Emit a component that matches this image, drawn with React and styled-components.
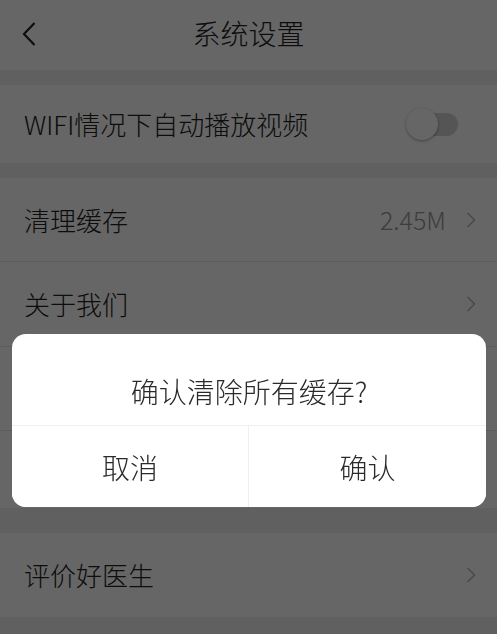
import React from "react";
import styled, { createGlobalStyle } from "styled-components";

const GlobalStyle = createGlobalStyle`
  html, body { margin: 0; padding: 0; }
  body {
    font-family: "Noto Sans CJK SC", "Noto Sans", sans-serif;
    background: #f0f0f0;
    -webkit-font-smoothing: antialiased;
  }
  * { box-sizing: border-box; }
`;

const Page = styled.div`
  min-height: 100vh;
  display: flex;
  flex-direction: column;
  background: #f0f0f0;
`;

const Header = styled.header`
  height: 70px;
  background: #fff;
  display: grid;
  grid-template-columns: 70px 1fr 70px;
  align-items: center;
`;

const BackButton = styled.button`
  border: 0;
  background: none;
  padding: 0 0 0 22px;
  height: 100%;
  display: flex;
  align-items: center;
  cursor: pointer;
  margin-top: -2px;
`;

const Title = styled.h1`
  margin: -5px 0 0;
  text-align: center;
  font-size: 28px;
  font-weight: 300;
  color: #222;
  line-height: 1;
`;

const Section = styled.section`
  margin-top: ${(p) => p.$gap}px;
  background: #fff;
  display: flex;
  flex-direction: column;
`;

const Row = styled.div`
  height: ${(p) => p.$h}px;
  display: flex;
  align-items: center;
  justify-content: space-between;
  padding: 0 21px 0 24px;
  border-bottom: ${(p) => (p.$last ? "none" : "1px solid #e6e6e6")};
`;

const Label = styled.span`
  font-size: 26px;
  font-weight: 300;
  color: #222;
  line-height: 1;
`;

const Trail = styled.div`
  display: flex;
  align-items: center;
  gap: 20px;
`;

const Value = styled.span`
  font-size: 25px;
  font-weight: 300;
  color: #999;
  line-height: 1;
`;

const Toggle = styled.div`
  position: relative;
  width: 52px;
  height: 34px;
  margin-right: 18px;
  display: flex;
  align-items: center;
  justify-content: flex-end;
`;

const Track = styled.div`
  width: 48px;
  height: 23px;
  border-radius: 12px;
  background: #d4d4d4;
`;

const Knob = styled.div`
  position: absolute;
  left: 0;
  top: 1px;
  width: 32px;
  height: 32px;
  border-radius: 50%;
  background: #fff;
  box-shadow: 0 1px 3px rgba(0, 0, 0, 0.35);
`;

const Overlay = styled.div`
  position: fixed;
  inset: 0;
  background: rgba(0, 0, 0, 0.6);
`;

const Dialog = styled.div`
  position: fixed;
  top: 334px;
  left: 12px;
  width: 474px;
  border-radius: 14px;
  background: #fff;
  overflow: hidden;
  display: flex;
  flex-direction: column;
`;

const DialogTitle = styled.div`
  height: 92px;
  display: flex;
  align-items: center;
  justify-content: center;
  font-size: 28px;
  font-weight: 300;
  color: #2a2a2a;
  border-bottom: 1px solid #efefef;
  padding-top: 22px;
`;

const Actions = styled.div`
  display: grid;
  grid-template-columns: 236px 1fr;
  height: 81px;
`;

const ActionButton = styled.button`
  border: 0;
  background: #fff;
  font-family: inherit;
  font-size: 28px;
  font-weight: 300;
  color: #2a2a2a;
  cursor: pointer;
  border-left: ${(p) => (p.$divider ? "1px solid #efefef" : "none")};
`;

const Chevron = () => (
  <svg width="10" height="16" viewBox="0 0 10 16" fill="none">
    <polyline points="1.5,1 8.5,8 1.5,15" stroke="#b8b8b8" strokeWidth="1.6" />
  </svg>
);

const BackIcon = () => (
  <svg width="14" height="24" viewBox="0 0 14 24" fill="none">
    <polyline points="12.5,1 2,12 12.5,23" stroke="#222" strokeWidth="2.2" />
  </svg>
);

export default function App() {
  return (
    <>
      <GlobalStyle />
      <Page>
        <Header>
          <BackButton aria-label="返回">
            <BackIcon />
          </BackButton>
          <Title>系统设置</Title>
          <span />
        </Header>

        <Section $gap={15}>
          <Row $h={78} $last>
            <Label>WIFI情况下自动播放视频</Label>
            <Toggle>
              <Track />
              <Knob />
            </Toggle>
          </Row>
        </Section>

        <Section $gap={15}>
          <Row $h={84}>
            <Label>清理缓存</Label>
            <Trail>
              <Value>2.45M</Value>
              <Chevron />
            </Trail>
          </Row>
          <Row $h={85}>
            <Label>关于我们</Label>
            <Chevron />
          </Row>
          <Row $h={84} />
          <Row $h={77} $last />
        </Section>

        <Section $gap={25}>
          <Row $h={84} $last>
            <Label>评价好医生</Label>
            <Chevron />
          </Row>
        </Section>
      </Page>

      <Overlay />
      <Dialog role="dialog">
        <DialogTitle>确认清除所有缓存?</DialogTitle>
        <Actions>
          <ActionButton>取消</ActionButton>
          <ActionButton $divider>确认</ActionButton>
        </Actions>
      </Dialog>
    </>
  );
}
